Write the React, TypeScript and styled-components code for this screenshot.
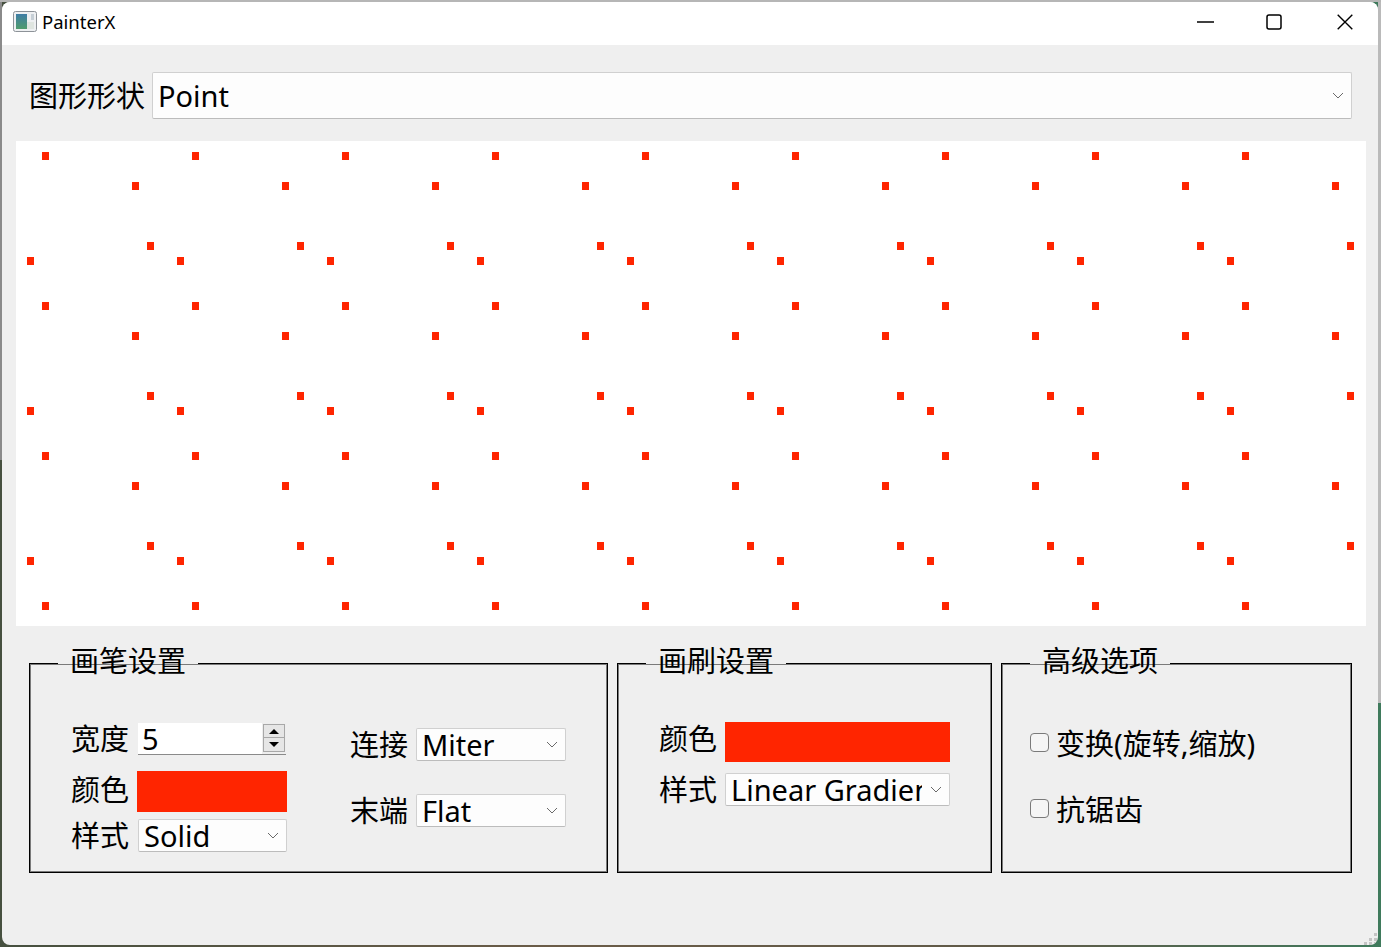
import React from "react";
import styled, { createGlobalStyle } from "styled-components";

const Global = createGlobalStyle`
  html, body { margin: 0; padding: 0; }
  body { font-family: "Noto Sans", "Noto Sans CJK SC", sans-serif; color: #000; }
`;

const Desktop = styled.div`
  position: relative;
  box-sizing: border-box;
  width: 1381px;
  height: 947px;
  padding: 2px 3px 2px 2px;
  overflow: hidden;
  background:
    linear-gradient(#b6b6b6, #b6b6b6) top / 100% 2px no-repeat,
    linear-gradient(#8a8a8a, #8a8a8a) left top / 2px 460px no-repeat,
    linear-gradient(#bababa, #bababa) right top / 3px 703px no-repeat,
    linear-gradient(90deg, #46503f 0%, #6b5c48 40%, #5f5a48 75%, #3f7a5c 100%);
`;

const Window = styled.div`
  position: relative;
  display: flex;
  flex-direction: column;
  height: 100%;
  background: #efefef;
  border-radius: 8px;
  overflow: hidden;
`;

const TitleBar = styled.header`
  display: flex;
  align-items: center;
  box-sizing: border-box;
  height: 43px;
  flex: none;
  background: #fff;
  padding: 0 0 4px 11px;
`;

const AppIcon = styled.svg`
  flex: none;
  width: 24px;
  height: 21px;
  margin-right: 5px;
`;

const TitleText = styled.span`
  font-size: 18.5px;
  flex: 1;
`;

const WindowButton = styled.div<{ $width: number }>`
  display: flex;
  align-items: center;
  justify-content: center;
  width: ${(p) => p.$width}px;
  height: 39px;
`;

const ShapeRow = styled.div`
  display: flex;
  align-items: center;
  height: 47px;
  margin: 27px 26px 0 27px;
`;

const Label = styled.span<{ $width?: number; $lift?: number }>`
  flex: none;
  width: ${(p) => p.$width ?? 66}px;
  margin-top: ${(p) => -(p.$lift ?? 0)}px;
  font-size: 29px;
  line-height: 34px;
  white-space: nowrap;
`;

const Combo = styled.div<{ $height?: number; $width?: number; $grow?: boolean; $inset?: number }>`
  display: flex;
  align-items: center;
  box-sizing: border-box;
  height: ${(p) => p.$height ?? 33}px;
  width: ${(p) => (p.$width ? `${p.$width}px` : "auto")};
  flex: ${(p) => (p.$grow ? 1 : "none")};
  margin-left: ${(p) => p.$inset ?? 0}px;
  padding: 0 7px 0 5px;
  background: #fdfdfd;
  border: 1px solid #d0d0d0;
  border-bottom-color: #bcbcbc;
  border-radius: 2px;
`;

const ComboText = styled.span`
  flex: 1;
  min-width: 0;
  overflow-x: clip;
  white-space: nowrap;
  font-size: 29px;
  line-height: 31px;
`;

const Chevron = styled.svg`
  flex: none;
  width: 12px;
  height: 7px;
  margin-left: 8px;
`;

const Canvas = styled.svg`
  display: block;
  flex: none;
  width: 1350px;
  height: 485px;
  margin: 22px 0 0 14px;
  background: #fff;
`;

const Groups = styled.div`
  display: flex;
  gap: 9px;
  margin: 18px 0 0 27px;
`;

const Group = styled.fieldset<{ $width: number }>`
  box-sizing: border-box;
  width: ${(p) => p.$width}px;
  height: 229px;
  margin: 0;
  padding: 0;
  min-width: 0;
  border: 1px solid #000;
  box-shadow: inset 0 0 0 1px #7a7a7a;
`;

const Legend = styled.legend`
  margin-left: 28px;
  padding: 0 12px 4px;
  font-size: 29px;
  line-height: 34px;
`;

const PenBody = styled.div`
  display: flex;
  gap: 63px;
  padding: 41px 0 0 41px;
`;

const Column = styled.div<{ $gap?: number; $top?: number }>`
  display: flex;
  flex-direction: column;
  gap: ${(p) => p.$gap ?? 0}px;
  padding-top: ${(p) => p.$top ?? 0}px;
`;

const Row = styled.div<{ $height?: number; $top?: number }>`
  display: flex;
  align-items: center;
  height: ${(p) => p.$height ?? 33}px;
  margin-top: ${(p) => p.$top ?? 0}px;
`;

const BrushBody = styled.div`
  padding: 40px 0 0 41px;
`;

const Swatch = styled.div<{ $width: number; $height: number }>`
  flex: none;
  width: ${(p) => p.$width}px;
  height: ${(p) => p.$height}px;
  background: #ff2500;
`;

const Spin = styled.div`
  display: flex;
  align-items: flex-start;
  box-sizing: border-box;
  flex: none;
  width: 148px;
  height: 32px;
  margin-left: 1px;
  padding-left: 4px;
  background: linear-gradient(90deg, #fff 124px, #eeeeee 124px);
  border-bottom: 1px solid #8a8a8a;
`;

const SpinValue = styled.span`
  flex: 1;
  font-size: 29px;
  line-height: 31px;
`;

const SpinButtons = styled.div`
  display: flex;
  flex-direction: column;
  flex: none;
  width: 22px;
  margin: 1px 1px 0 0;
`;

const SpinButton = styled.div<{ $down?: boolean }>`
  display: flex;
  align-items: center;
  justify-content: center;
  box-sizing: border-box;
  height: 14px;
  background: #e6e6e6;
  border: 1px solid #a8a8a8;
  border-top-width: ${(p) => (p.$down ? 0 : 1)}px;
`;

const Arrow = styled.div<{ $down?: boolean }>`
  width: 0;
  height: 0;
  border-left: 5px solid transparent;
  border-right: 5px solid transparent;
  border-${(p) => (p.$down ? "top" : "bottom")}: 5px solid #000;
`;

const AdvancedBody = styled.div`
  display: flex;
  flex-direction: column;
  gap: 33px;
  padding: 46px 0 0 28px;
`;

const CheckRow = styled.label`
  display: flex;
  align-items: center;
  box-sizing: border-box;
  height: 33px;
  padding-bottom: 2px;
  font-size: 29px;
  line-height: 31px;
  white-space: nowrap;
`;

const CheckBox = styled.span`
  flex: none;
  box-sizing: border-box;
  width: 19px;
  height: 19px;
  margin: -3px 7px 0 0;
  background: #f5f5f5;
  border: 1px solid #7a7a7a;
  border-radius: 4px;
`;

const Grip = styled.svg`
  position: absolute;
  right: 0;
  bottom: 0;
  width: 14px;
  height: 14px;
`;

const tile: [number, number, number, number][] = [
  [45, 155, 9, 4],
  [135, 185, 9, 3],
  [150, 245, 9, 3],
  [30, 260, 9, 3],
];

const points = tile.flatMap(([x, y, cols, rows]) =>
  Array.from({ length: cols * rows }, (_, i) => ({
    x: x + (i % cols) * 150 - 16 - 3,
    y: y + Math.floor(i / cols) * 150 - 141 - 3,
  }))
);

const ChevronIcon = () => (
  <Chevron viewBox="0 0 12 7">
    <path d="M1 1l5 5 5-5" fill="none" stroke="#6a6a6a" strokeWidth="1" />
  </Chevron>
);

const PenCombo = ({ text, width, inset }: { text: string; width: number; inset?: number }) => (
  <Combo $width={width} $inset={inset}>
    <ComboText>{text}</ComboText>
    <ChevronIcon />
  </Combo>
);

export default function App() {
  return (
    <Desktop>
      <Global />
      <Window>
        <TitleBar>
          <AppIcon viewBox="0 0 24 21">
            <rect x="0.5" y="0.5" width="23" height="20" rx="2" fill="#eef0f2" stroke="#8d9298" />
            <defs>
              <linearGradient id="ic" x1="0" y1="0" x2="0" y2="1">
                <stop offset="0" stopColor="#3f7da6" />
                <stop offset="1" stopColor="#4f9c6c" />
              </linearGradient>
            </defs>
            <rect x="3" y="3" width="11" height="15" fill="url(#ic)" />
            <rect x="14" y="11" width="7" height="7" fill="#dfe5e0" />
            <rect x="18" y="3" width="3" height="6" fill="#c6cfd6" />
          </AppIcon>
          <TitleText>PainterX</TitleText>
          <WindowButton $width={62}>
            <svg width="17" height="2" viewBox="0 0 17 2">
              <path d="M0 1h17" stroke="#000" strokeWidth="1.4" />
            </svg>
          </WindowButton>
          <WindowButton $width={75}>
            <svg width="16" height="16" viewBox="0 0 16 16">
              <rect x="1" y="1" width="14" height="14" rx="2" fill="none" stroke="#000" strokeWidth="1.5" />
            </svg>
          </WindowButton>
          <WindowButton $width={67}>
            <svg width="16" height="16" viewBox="0 0 16 16">
              <path d="M.7.7l14.6 14.6M15.3.7L.7 15.3" stroke="#000" strokeWidth="1.4" fill="none" />
            </svg>
          </WindowButton>
        </TitleBar>

        <ShapeRow>
          <Label $width={123}>图形形状</Label>
          <Combo $height={47} $grow>
            <ComboText>Point</ComboText>
            <ChevronIcon />
          </Combo>
        </ShapeRow>

        <Canvas viewBox="0 0 1350 485">
          {points.map((p) => (
            <rect key={`${p.x}-${p.y}`} x={p.x} y={p.y} width="7" height="8" fill="#ff2500" />
          ))}
        </Canvas>

        <Groups>
          <Group $width={579}>
            <Legend>画笔设置</Legend>
            <PenBody>
              <Column>
                <Row $height={32}>
                  <Label>宽度</Label>
                  <Spin>
                    <SpinValue>5</SpinValue>
                    <SpinButtons>
                      <SpinButton><Arrow /></SpinButton>
                      <SpinButton $down><Arrow $down /></SpinButton>
                    </SpinButtons>
                  </Spin>
                </Row>
                <Row $height={41} $top={16}>
                  <Label $lift={4}>颜色</Label>
                  <Swatch $width={150} $height={41} />
                </Row>
                <Row $top={7}>
                  <Label>样式</Label>
                  <PenCombo text="Solid" width={149} inset={1} />
                </Row>
              </Column>
              <Column $gap={33} $top={5}>
                <Row>
                  <Label>连接</Label>
                  <PenCombo text="Miter" width={150} />
                </Row>
                <Row>
                  <Label>末端</Label>
                  <PenCombo text="Flat" width={150} />
                </Row>
              </Column>
            </PenBody>
          </Group>

          <Group $width={375}>
            <Legend>画刷设置</Legend>
            <BrushBody>
              <Column $gap={11}>
                <Row $height={40}>
                  <Label $lift={6}>颜色</Label>
                  <Swatch $width={225} $height={40} />
                </Row>
                <Row>
                  <Label>样式</Label>
                  <PenCombo text="Linear Gradient" width={225} />
                </Row>
              </Column>
            </BrushBody>
          </Group>

          <Group $width={351}>
            <Legend>高级选项</Legend>
            <AdvancedBody>
              <CheckRow><CheckBox />变换(旋转,缩放)</CheckRow>
              <CheckRow><CheckBox />抗锯齿</CheckRow>
            </AdvancedBody>
          </Group>
        </Groups>

        <Grip viewBox="0 0 14 14">
          <g fill="#c4c4c4">
            <rect x="10" y="2" width="3" height="3" />
            <rect x="5" y="7" width="3" height="3" />
            <rect x="10" y="7" width="3" height="3" />
            <rect x="0" y="11" width="3" height="3" />
            <rect x="5" y="11" width="3" height="3" />
            <rect x="10" y="11" width="3" height="3" />
          </g>
        </Grip>
      </Window>
    </Desktop>
  );
}
